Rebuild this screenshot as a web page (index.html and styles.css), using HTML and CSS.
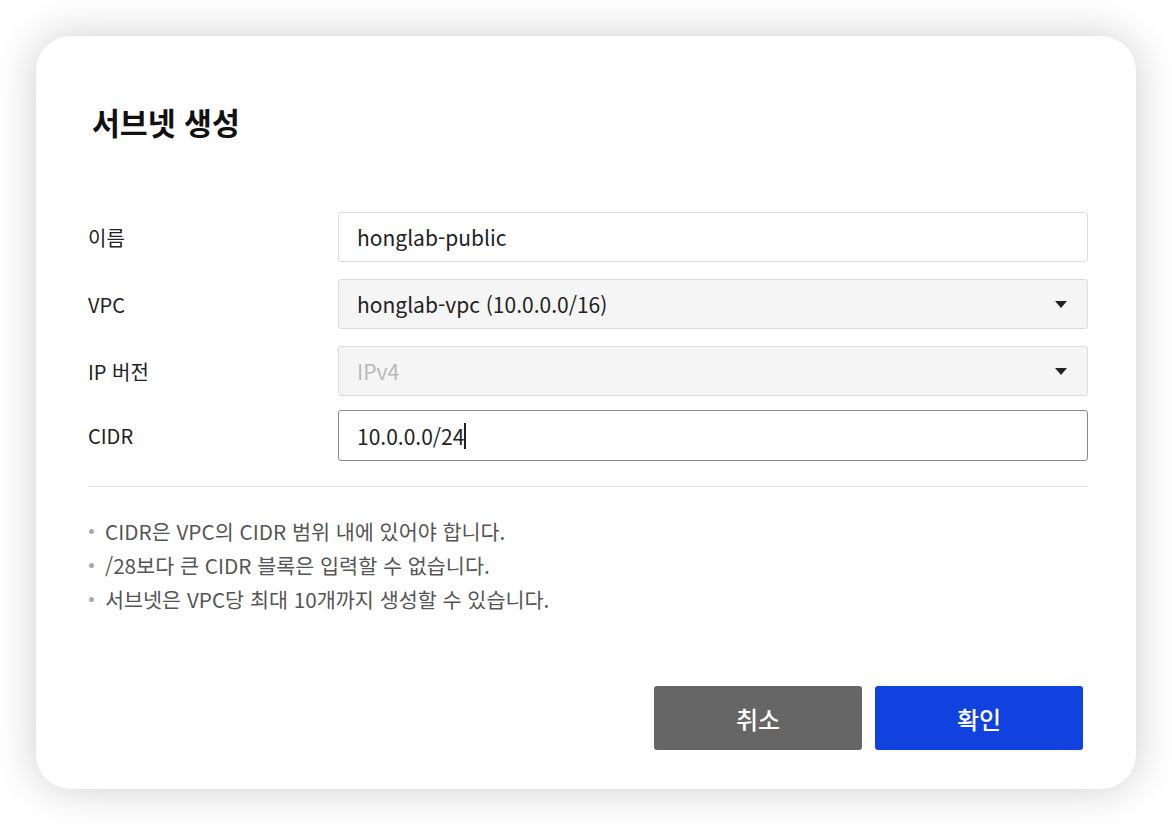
FILE: index.html
```html
<!DOCTYPE html>
<html lang="ko">
<head>
<meta charset="utf-8">
<title>서브넷 생성</title>
<link rel="stylesheet" href="styles.css">
</head>
<body>
<div class="modal">
  <h1 class="modal-title">서브넷 생성</h1>
  <div class="form">
    <div class="row">
      <div class="label">이름</div>
      <div class="field">honglab-public</div>
    </div>
    <div class="row">
      <div class="label">VPC</div>
      <div class="field select"><span>honglab-vpc (10.0.0.0/16)</span><span class="arrow"></span></div>
    </div>
    <div class="row">
      <div class="label">IP 버전</div>
      <div class="field select"><span class="placeholder">IPv4</span><span class="arrow"></span></div>
    </div>
    <div class="row row-tight">
      <div class="label">CIDR</div>
      <div class="field focused"><span>10.0.0.0/24</span><span class="caret"></span></div>
    </div>
  </div>
  <div class="divider"></div>
  <ul class="notes">
    <li>CIDR은 VPC의 CIDR 범위 내에 있어야 합니다.</li>
    <li>/28보다 큰 CIDR 블록은 입력할 수 없습니다.</li>
    <li>서브넷은 VPC당 최대 10개까지 생성할 수 있습니다.</li>
  </ul>
  <div class="footer">
    <button class="btn btn-cancel">취소</button>
    <button class="btn btn-ok">확인</button>
  </div>
</div>
</body>
</html>
```
FILE: styles.css
```css
* { box-sizing: border-box; }
html, body { margin: 0; padding: 0; background: #ffffff; }
body {
  font-family: "Noto Sans CJK KR", "Noto Sans", sans-serif;
  color: #222;
  padding: 36px;
}
.modal {
  width: 1100px;
  height: 753px;
  background: #fff;
  border-radius: 35px;
  box-shadow: 0 0 44px rgba(0, 0, 0, 0.2);
  padding: 65px 48px 39px 52px;
  display: flex;
  flex-direction: column;
}
.modal-title {
  margin: 0;
  font-size: 30.3px;
  line-height: 42px;
  font-weight: 700;
  color: #111;
  padding-left: 4px;
}
.form { margin-top: 69px; }
.row {
  display: flex;
  align-items: center;
  margin-bottom: 17px;
}
.row-tight { margin-top: -3px; margin-bottom: 0; }
.label {
  width: 250px;
  font-size: 20px;
  color: #222;
}
.field {
  flex: 1;
  height: 50px;
  border: 1px solid #dcdcdc;
  border-radius: 3px;
  padding: 0 20px 0 18px;
  display: flex;
  align-items: center;
  font-size: 21px;
  color: #222;
  background: #fff;
}
.select {
  background: #f5f5f5;
  justify-content: space-between;
}
.placeholder { color: #b8b8b8; }
.arrow {
  width: 0;
  height: 0;
  border-left: 6px solid transparent;
  border-right: 6px solid transparent;
  border-top: 7px solid #222;
}
.focused {
  height: 51px;
  border-color: #8a8a8a;
}
.caret {
  display: inline-block;
  width: 1.5px;
  height: 26px;
  background: #222;
  margin-left: 0;
}
.divider {
  margin-top: 25px;
  height: 1px;
  background: #e3e3e3;
}
.notes {
  list-style: none;
  margin: 27px 0 0 0;
  padding: 0;
}
.notes li {
  position: relative;
  padding-left: 17px;
  font-size: 20.7px;
  line-height: 34px;
  color: #555;
}
.notes li::before {
  content: "";
  position: absolute;
  left: 1px;
  top: 15px;
  width: 5px;
  height: 5px;
  border-radius: 50%;
  background: #a8a8a8;
}
.footer {
  margin-top: auto;
  display: flex;
  justify-content: flex-end;
  gap: 13px;
  padding-right: 5px;
}
.btn {
  width: 208px;
  height: 64px;
  border: none;
  border-radius: 3px;
  font-family: inherit;
  font-size: 24px;
  font-weight: 500;
  color: #fff;
}
.btn-cancel { background: #666666; }
.btn-ok { background: #1141df; }
```
